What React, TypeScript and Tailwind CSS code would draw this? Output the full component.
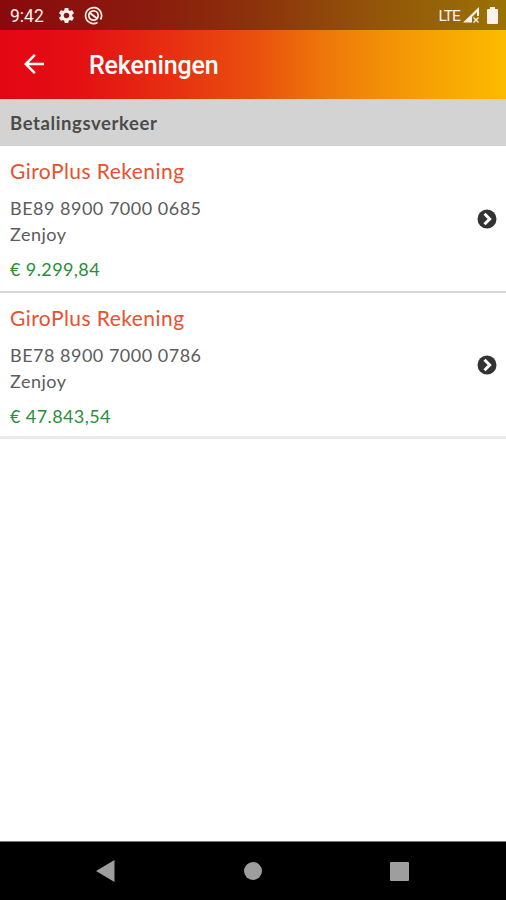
import { MdArrowBack, MdSettings } from "react-icons/md";

type Account = {
  name: string;
  iban: string;
  holder: string;
  balance: string;
};

const ACCOUNTS: Account[] = [
  { name: "GiroPlus Rekening", iban: "BE89 8900 7000 0685", holder: "Zenjoy", balance: "€ 9.299,84" },
  { name: "GiroPlus Rekening", iban: "BE78 8900 7000 0786", holder: "Zenjoy", balance: "€ 47.843,54" },
];

function StatusBar() {
  return (
    <div className="flex h-[30px] items-center bg-[linear-gradient(90deg,#8a090d_0%,#8b1c0d_30%,#8c320b_50%,#93560a_75%,#997204_100%)] pr-2 pl-[10px] font-[Roboto,sans-serif] text-[#fff1ec]">
      <span className="w-[47px] pt-[2px] text-[17.5px] leading-[30px]">9:42</span>
      <MdSettings className="size-[19px]" aria-hidden="true" />
      <svg className="ml-[8px] size-[19px]" viewBox="0 0 19 19" fill="none" stroke="currentColor" aria-hidden="true">
        <path d="M13.500 16.500A8 8 0 1 1 16.500 13.500" strokeWidth="1.700" />
        <circle cx="9.500" cy="9.500" r="4.700" strokeWidth="1.700" />
        <path d="m6 7 7 5.500" strokeWidth="2.200" />
      </svg>
      <span className="ml-auto pt-[2px] text-[15.5px] leading-[30px] tracking-[-0.9px]">LTE</span>
      <svg className="ml-[3px] h-[18px] w-[17px]" viewBox="0 0 17 18" aria-hidden="true">
        <path d="M0 16.500 16 1v9h-2V6L9 11v5.500z" fill="currentColor" />
        <path d="m10.500 11.500 5 5m0-5-5 5" stroke="currentColor" strokeWidth="1.400" />
      </svg>
      <svg className="ml-[7px] h-[17px] w-[11px]" viewBox="0 0 11 17" fill="currentColor" aria-hidden="true">
        <path d="M3 0h5v2h2q1 0 1 1v13q0 1-1 1H1q-1 0-1-1V3q0-1 1-1h2z" />
      </svg>
    </div>
  );
}

function AppBar() {
  return (
    <header className="flex h-[69px] items-center bg-[linear-gradient(90deg,#e30613_0%,#e40f13_15%,#e73111_35%,#e94f0e_50%,#ee790a_65%,#f59c05_82%,#fcbb00_100%)] pl-[19px] text-white">
      <button type="button" aria-label="Terug" className="flex w-[70px] pb-[2px]">
        <MdArrowBack className="size-[30px]" />
      </button>
      <h1 className="pt-[3px] font-[Roboto,sans-serif] text-[25px] leading-8 font-medium tracking-[-0.15px]">Rekeningen</h1>
    </header>
  );
}

function AccountRow({ account }: { account: Account }) {
  return (
    <li className="flex h-[147px] items-center justify-between border-b-2 border-[#d6d6d6] pr-[9px] pl-[10px] last:h-[146px] last:border-b-[3px] last:border-[#ebebeb]">
      <div className="h-full">
        <h3 className="pt-[9px] text-[21px] leading-8 tracking-[0.45px] text-[#e8502e]">{account.name}</h3>
        <p className="mt-[8px] text-[18px] leading-[26px] tracking-[0.5px] text-[#5c5c5c]">{account.iban}</p>
        <p className="text-[18px] leading-[26px] tracking-[0.5px] text-[#5c5c5c]">{account.holder}</p>
        <p className="mt-[9px] text-[18px] leading-[26px] tracking-[0.4px] text-[#2a8e37]">{account.balance}</p>
      </div>
      <svg className="size-[20px]" viewBox="0 0 20 20" fill="none" aria-hidden="true">
        <circle cx="10" cy="10" r="9.500" fill="#333" />
        <path d="m7.500 4.800 5.200 5.200-5.200 5.200" stroke="white" strokeWidth="3" />
      </svg>
    </li>
  );
}

function NavigationBar() {
  return (
    <nav className="flex h-[59px] items-center justify-between border-t border-[#777] bg-black pr-[97px] pl-[96px] text-[#9e9e9e]">
      <svg className="h-[22px] w-[19px]" viewBox="0 0 19 22" fill="currentColor" aria-hidden="true">
        <path d="M0 11 18.500 0v22z" />
      </svg>
      <span className="size-[18px] rounded-full bg-current" />
      <span className="size-[19px] rounded-[1px] bg-current" />
    </nav>
  );
}

export default function App() {
  return (
    <div className="flex h-[900px] w-[506px] flex-col overflow-hidden bg-white font-[Lato,sans-serif]">
      <StatusBar />
      <AppBar />
      <main className="flex-1">
        <h2 className="h-[47px] bg-[#d3d3d3] pl-[10px] text-[18.500px] leading-[49px] font-bold tracking-[0.6px] text-[#4b4b4b]">Betalingsverkeer</h2>
        <ul>
          {ACCOUNTS.map((account) => (
            <AccountRow key={account.iban} account={account} />
          ))}
        </ul>
      </main>
      <NavigationBar />
    </div>
  );
}
